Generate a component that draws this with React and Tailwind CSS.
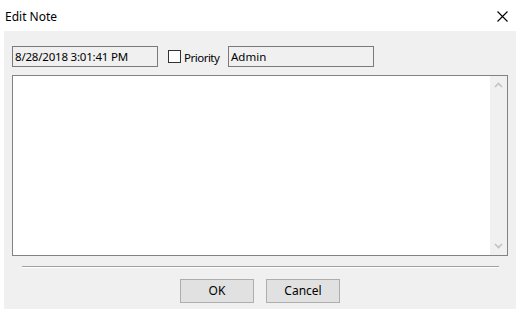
import React from 'react';

const font = {fontFamily: '"Noto Sans", "Open Sans", sans-serif'};

function Chevron({up}) {
  return (
    <svg width="9" height="6" viewBox="0 0 9 6" className="block">
      <path
        d={up ? 'M1 5 L4.5 1.5 L8 5' : 'M1 1 L4.5 4.5 L8 1'}
        fill="none"
        stroke="#c2c2c2"
        strokeWidth="1.6"
      />
    </svg>
  );
}

export default function App() {
  return (
    <div
      className="w-[520px] h-[309px] bg-white flex flex-col text-[12px] text-black"
      style={font}
    >
      <div className="h-[31px] flex items-center justify-between pl-[5px] pr-[12px] shrink-0">
        <span className="leading-none pt-[2px]">Edit Note</span>
        <svg width="11" height="11" viewBox="0 0 11 11" className="mt-[2px]">
          <path d="M0.5 0.5 L10.5 10.5 M10.5 0.5 L0.5 10.5" stroke="#000" strokeWidth="1.1" />
        </svg>
      </div>

      <div className="mx-[4px] flex-1 bg-[#f0f0f0] flex flex-col pl-[8px] pt-[15px]">
        <div className="flex items-center h-[21px]">
          <div className="w-[146px] h-[21px] border border-[#7a7a7a] flex items-center pl-[2px] leading-none text-[11.5px] tracking-[-0.2px]">
            8/28/2018 3:01:41 PM
          </div>
          <div className="ml-[10px] w-[13px] h-[13px] border border-[#333333] bg-white shrink-0" />
          <span className="ml-[3px] mt-[2px] w-[44px] leading-none text-[11.5px] tracking-[-0.5px] whitespace-nowrap">
            Priority
          </span>
          <div className="w-[146px] h-[21px] border border-[#7a7a7a] flex items-center pl-[2px] leading-none text-[11.5px]">
            Admin
          </div>
        </div>

        <div className="mt-[8px] w-[496px] h-[181px] border border-[#828282] bg-white flex justify-end">
          <div className="w-[17px] h-full bg-[#f0f0f0] flex flex-col items-center justify-between py-[6px]">
            <Chevron up />
            <Chevron />
          </div>
        </div>

        <div className="mt-[10px] ml-[10px] w-[477px] h-[2px] border-t border-[#a0a0a0] border-b border-b-white" />

        <div className="mt-[11px] flex justify-center gap-[12px] pr-[8px]">
          <button className="w-[74px] h-[24px] bg-[#e1e1e1] border border-[#adadad] leading-none">
            OK
          </button>
          <button className="w-[74px] h-[24px] bg-[#e1e1e1] border border-[#adadad] leading-none">
            Cancel
          </button>
        </div>
      </div>
    </div>
  );
}
